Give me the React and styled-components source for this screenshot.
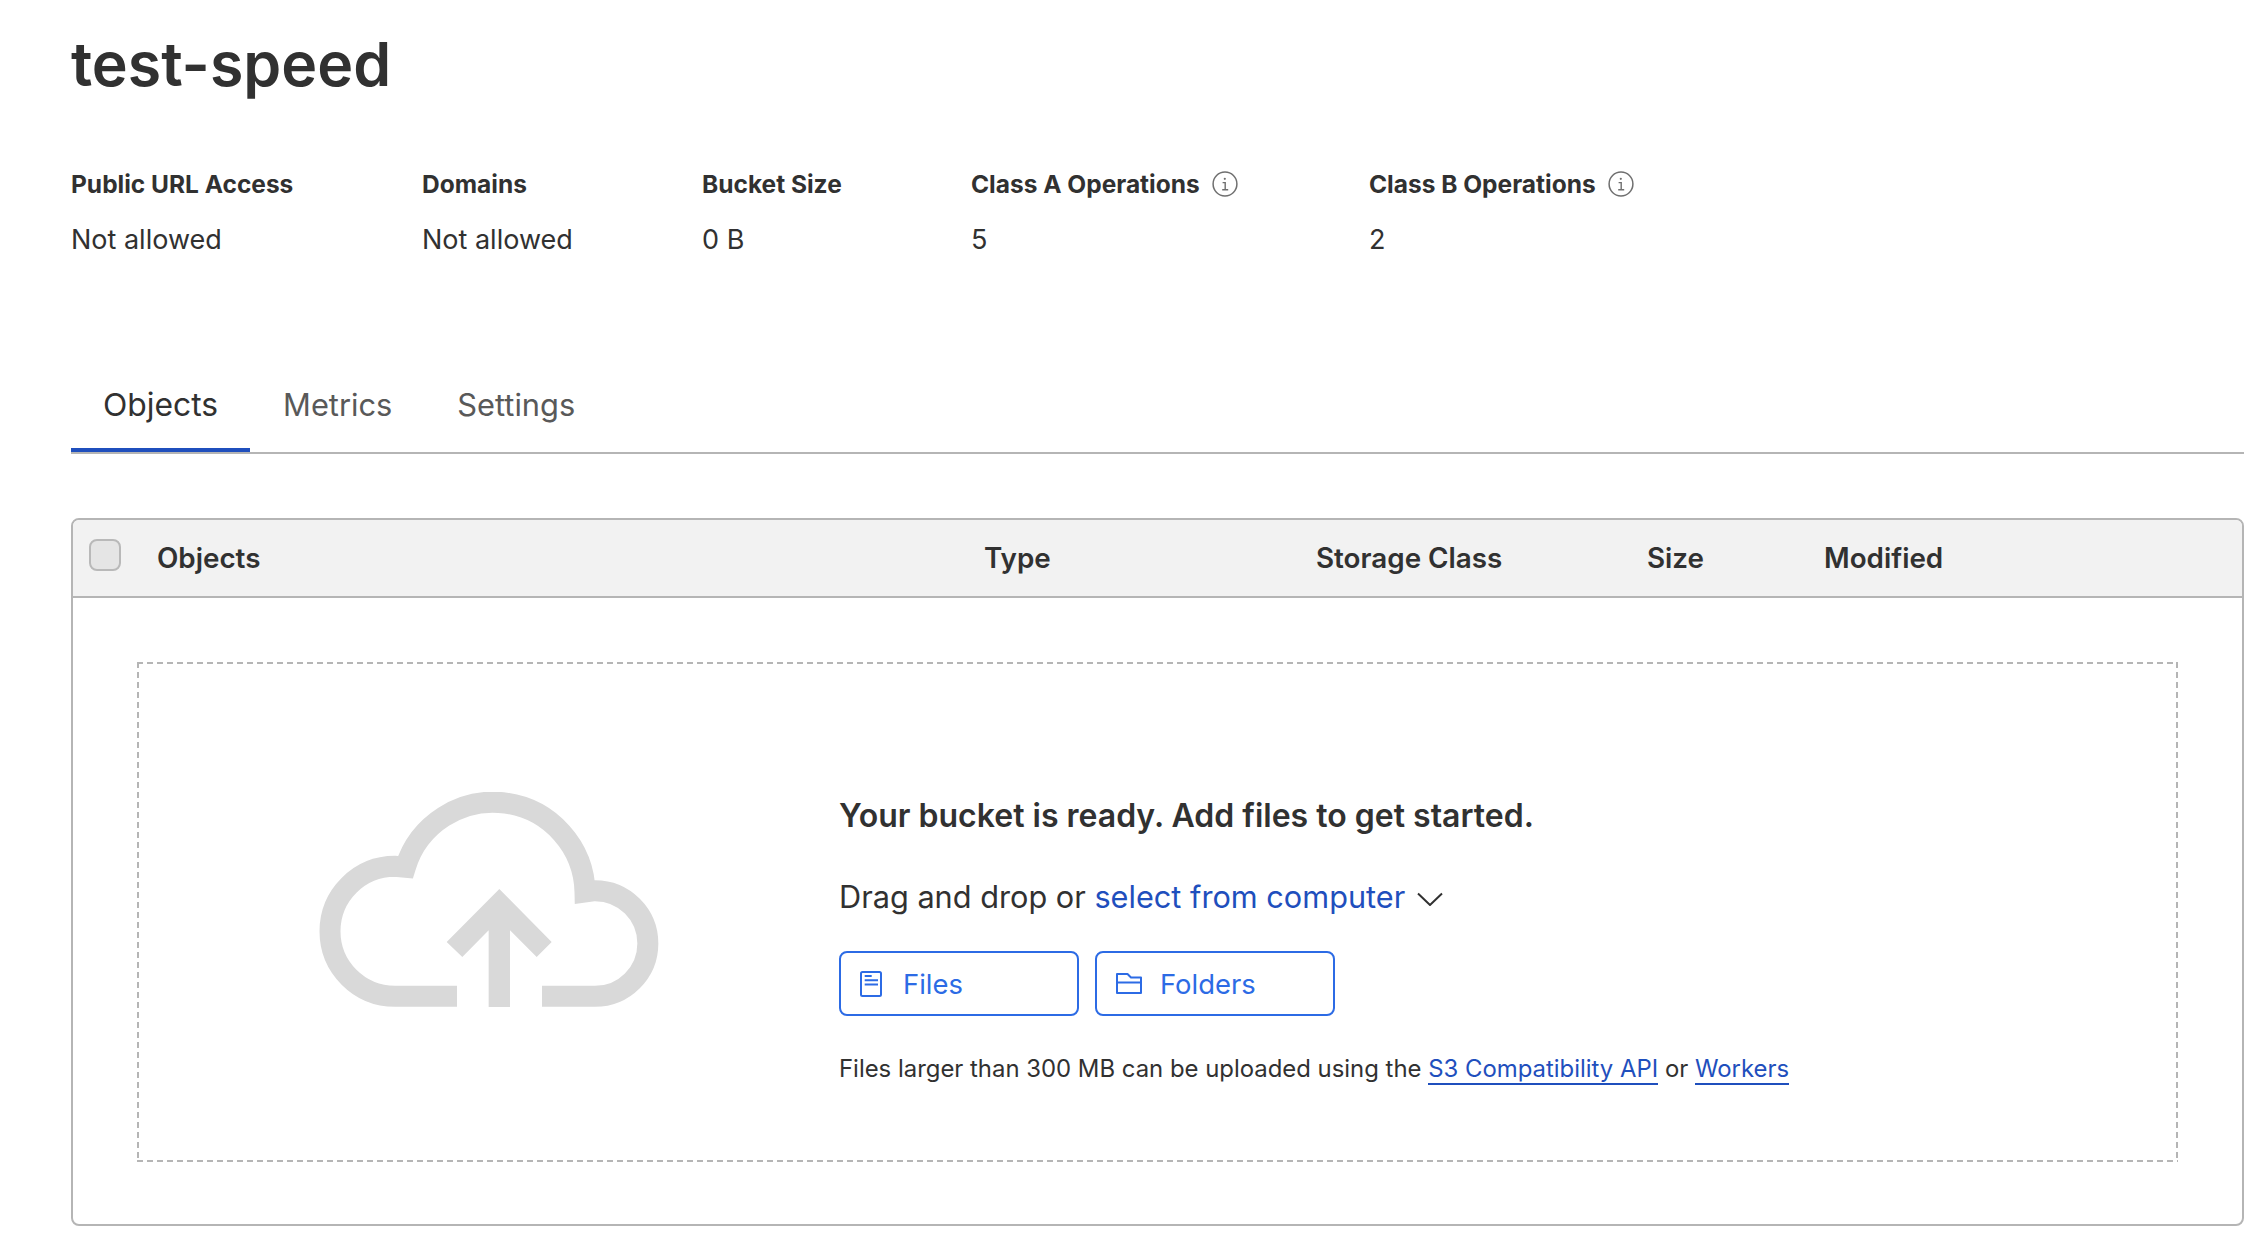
import React from "react";
import styled, { createGlobalStyle } from "styled-components";

const GlobalStyle = createGlobalStyle`
    html, body {
        margin: 0;
        padding: 0;
        background: #ffffff;
    }
    body {
        font-family: Inter, "Liberation Sans", sans-serif;
        color: #313131;
    }
`;

function InfoIcon() {
    return (
        <InfoSvg viewBox="0 0 26 26" fill="none" stroke="#6f6f6f">
            <circle cx="13" cy="13" r="11.9" strokeWidth="1.5" />
            <path d="M10.6 11.6h2.6v7M10.2 18.8h6" strokeWidth="1.4" />
            <circle cx="12.8" cy="7.8" r="1.1" fill="#6f6f6f" stroke="none" />
        </InfoSvg>
    );
}

function CloudIcon() {
    return (
        <CloudSvg viewBox="117 95 1020 645">
            <path
                d="M531 708H345A195 195 0 0 1 345 318L376 321A275.5 275.5 0 0 1 915 395L945 391A158.5 158.5 0 0 1 945 708H786"
                fill="none"
                stroke="#d9d9d9"
                strokeWidth="63"
            />
            <path d="M658 386L815 545L770 590L690 510V740H626V510L547 590L500 545Z" fill="#d9d9d9" />
        </CloudSvg>
    );
}

function FileIcon() {
    return (
        <FileSvg viewBox="0 0 22 26" fill="none" stroke="#2c6be5" strokeWidth="2">
            <rect x="1" y="1" width="20" height="24" rx="1.5" />
            <path d="M4.7 5h7M4.7 9.3h13.3M4.7 13.5h13.3" />
        </FileSvg>
    );
}

function FolderIcon() {
    return (
        <FolderSvg viewBox="0 0 26 21" fill="none" stroke="#2c6be5" strokeWidth="2" strokeLinejoin="round">
            <path d="M1 20V1h10.5L15 4.5H25V20ZM1 9.5H25" />
        </FolderSvg>
    );
}

const stats = [
    { label: "Public URL Access", value: "Not allowed", width: 351 },
    { label: "Domains", value: "Not allowed", width: 280 },
    { label: "Bucket Size", value: "0 B", width: 269 },
    { label: "Class A Operations", value: "5", width: 398, info: true },
    { label: "Class B Operations", value: "2", width: 398, info: true },
];

export default function App() {
    return (
        <Page>
            <GlobalStyle />
            <Title>test-speed</Title>
            <StatRow>
                {stats.map((stat) => (
                    <Stat key={stat.label} $width={stat.width}>
                        <StatLabel>
                            {stat.label}
                            {stat.info && <InfoIcon />}
                        </StatLabel>
                        <StatValue>{stat.value}</StatValue>
                    </Stat>
                ))}
            </StatRow>
            <Tabs>
                <Tab $active>Objects</Tab>
                <Tab>Metrics</Tab>
                <Tab>Settings</Tab>
            </Tabs>
            <Panel>
                <HeaderRow>
                    <Checkbox />
                    <HeaderCell>Objects</HeaderCell>
                    <HeaderCell>Type</HeaderCell>
                    <HeaderCell>Storage Class</HeaderCell>
                    <HeaderCell>Size</HeaderCell>
                    <HeaderCell>Modified</HeaderCell>
                </HeaderRow>
                <PanelBody>
                    <DropZone>
                        <CloudIcon />
                        <DropContent>
                            <DropHeading>Your bucket is ready. Add files to get started.</DropHeading>
                            <DropLine>
                                Drag and drop or <BlueText>select from computer</BlueText>
                                <ChevronSvg viewBox="0 0 26 14" fill="none" stroke="#313131" strokeWidth="2">
                                    <path d="M1 1.5l12 11.5 12-11.5" />
                                </ChevronSvg>
                            </DropLine>
                            <ButtonRow>
                                <UploadButton>
                                    <FileIcon />
                                    Files
                                </UploadButton>
                                <UploadButton $folder>
                                    <FolderIcon />
                                    Folders
                                </UploadButton>
                            </ButtonRow>
                            <Note>
                                Files larger than 300 MB can be uploaded using the <NoteLink>S3 Compatibility API</NoteLink> or{" "}
                                <NoteLink>Workers</NoteLink>
                            </Note>
                        </DropContent>
                    </DropZone>
                </PanelBody>
            </Panel>
        </Page>
    );
}

const Page = styled.div`
    width: 2264px;
    height: 1242px;
    box-sizing: border-box;
    padding: 26px 20px 0 71px;
    overflow: hidden;
`;

const Title = styled.h1`
    margin: 0;
    font-size: 60.8px;
    line-height: 76px;
    font-weight: 600;
    color: #313131;
`;

const StatRow = styled.div`
    display: flex;
    margin-top: 66px;
`;

const Stat = styled.div`
    width: ${({ $width }) => $width}px;
`;

const StatLabel = styled.div`
    display: flex;
    align-items: center;
    gap: 12px;
    height: 32px;
    font-size: 24.5px;
    font-weight: 700;
`;

const StatValue = styled.div`
    margin-top: 24px;
    font-size: 27px;
    line-height: 32px;
`;

const InfoSvg = styled.svg`
    width: 26px;
    height: 26px;
`;

const Tabs = styled.div`
    display: flex;
    margin-top: 120px;
    border-bottom: 2px solid #b5b5b5;
    height: 76px;
`;

const Tab = styled.div`
    height: 76px;
    box-sizing: border-box;
    padding: 0 32px 15px;
    margin-right: 1px;
    display: flex;
    align-items: center;
    font-size: ${({ $active }) => ($active ? "31.8px" : "30.8px")};
    color: ${({ $active }) => ($active ? "#313131" : "#595959")};
    border-bottom: 4px solid ${({ $active }) => ($active ? "#1f4fbd" : "transparent")};
`;

const Panel = styled.div`
    margin-top: 64px;
    box-sizing: border-box;
    height: 708px;
    border: 2px solid #b5b5b5;
    border-radius: 8px;
    overflow: hidden;
`;

const HeaderRow = styled.div`
    display: grid;
    grid-template-columns: 68px 827px 332px 331px 177px 1fr;
    align-items: center;
    height: 76px;
    padding-left: 16px;
    background: #f2f2f2;
    border-bottom: 2px solid #b5b5b5;
`;

const Checkbox = styled.div`
    box-sizing: border-box;
    width: 32px;
    height: 32px;
    margin-top: -6px;
    border: 2px solid #b9b9b9;
    border-radius: 8px;
    background: #e5e5e5;
`;

const HeaderCell = styled.div`
    font-size: 27.8px;
    font-weight: 600;
    color: #313131;
`;

const PanelBody = styled.div`
    padding: 64px;
`;

// the dashes are 6px on, 4px off, which a plain dashed border can't give
const DropZone = styled.div`
    box-sizing: border-box;
    display: flex;
    align-items: flex-start;
    height: 500px;
    padding: 130px 0 0 182px;
    background-image:
        repeating-linear-gradient(90deg, #b5b5b5 0 6px, transparent 6px 10px),
        repeating-linear-gradient(90deg, #b5b5b5 0 6px, transparent 6px 10px),
        repeating-linear-gradient(180deg, #b5b5b5 0 6px, transparent 6px 10px),
        repeating-linear-gradient(180deg, #b5b5b5 0 6px, transparent 6px 10px);
    background-size: 100% 2px, 100% 2px, 2px 100%, 2px 100%;
    background-position: top left, bottom left, top left, top right;
    background-repeat: no-repeat;
`;

const CloudSvg = styled.svg`
    flex: none;
    width: 340px;
    height: 215px;
`;

const DropContent = styled.div`
    margin-left: 180px;
    margin-top: 4px;
`;

const DropHeading = styled.h2`
    margin: 0;
    font-size: 32px;
    line-height: 40px;
    font-weight: 600;
`;

const DropLine = styled.div`
    display: flex;
    align-items: center;
    margin-top: 41px;
    font-size: 30.7px;
    line-height: 40px;
    white-space: pre-wrap;
`;

const BlueText = styled.span`
    color: #1f4fbd;
`;

const ChevronSvg = styled.svg`
    width: 26px;
    height: 14px;
    margin-left: 12px;
    margin-top: 4px;
`;

const ButtonRow = styled.div`
    display: flex;
    gap: 16px;
    margin-top: 34px;
`;

const UploadButton = styled.div`
    box-sizing: border-box;
    display: flex;
    align-items: center;
    gap: ${({ $folder }) => ($folder ? "18px" : "21px")};
    width: 240px;
    height: 65px;
    padding-left: 19px;
    border: 2px solid #2c6be5;
    border-radius: 8px;
    font-size: 27.4px;
    color: #2c6be5;
`;

const FileSvg = styled.svg`
    width: 22px;
    height: 26px;
`;

const FolderSvg = styled.svg`
    width: 26px;
    height: 21px;
`;

const Note = styled.div`
    margin-top: 37px;
    font-size: 23.9px;
    line-height: 32px;
`;

const NoteLink = styled.span`
    color: #1f4fbd;
    border-bottom: 2px solid #1f4fbd;
`;
